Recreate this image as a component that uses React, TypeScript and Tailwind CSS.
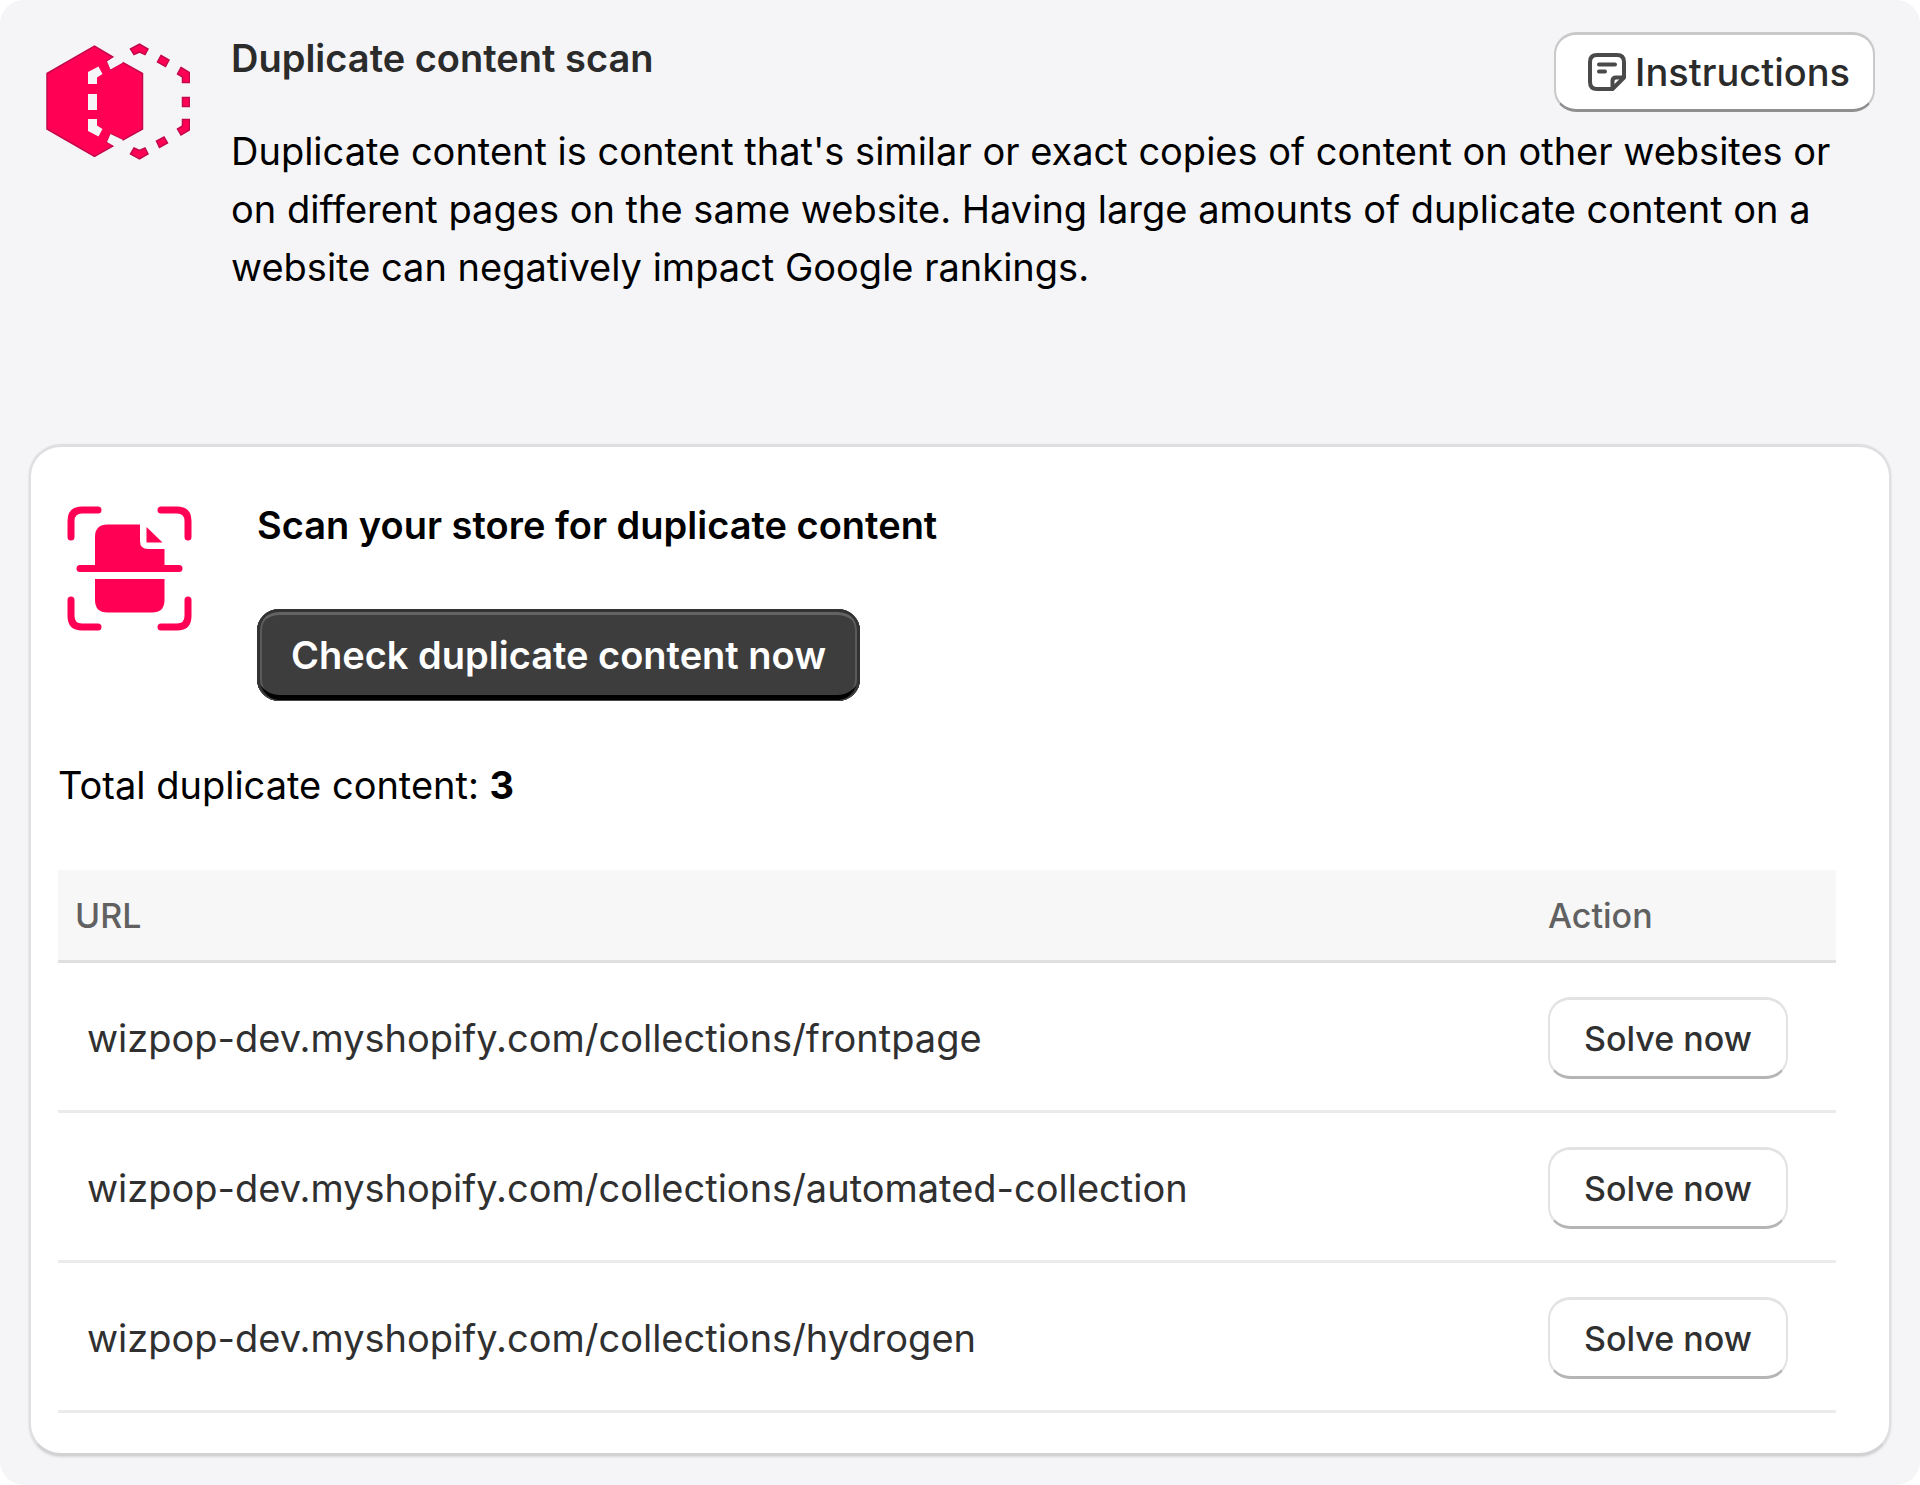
interface DuplicatePage {
  url: string;
}

const duplicatePages: DuplicatePage[] = [
  { url: 'wizpop-dev.myshopify.com/collections/frontpage' },
  { url: 'wizpop-dev.myshopify.com/collections/automated-collection' },
  { url: 'wizpop-dev.myshopify.com/collections/hydrogen' },
];

function DuplicateIcon() {
  return (
    <svg className="mt-[11px] h-[118px] w-36 shrink-0" viewBox="0 0 144 118" aria-hidden="true">
      <g fill="#ff0055" stroke="#c4074c" strokeWidth="1.5">
        <path d="M1 30.5 48.5 3 67 14 61 18 65 26 77 19.500 96.500 30.500V86L77 97 65 91 61 99 67 103 48.500 113.500 1 86Z" />
        <path d="M84.500 6 93.500 1 102 6 99 11.500 93.500 9 88 11.500Z" />
        <path d="M115 12.500 123 17 119.500 23.500 111.500 19Z" />
        <path d="M135 24.500 143.500 29.500V39.500H136.500V34L131.500 31Z" />
        <path d="M136.500 54.500h7v9h-7z" />
        <path d="M136.500 76.500h7v10.500l-8.500 5-3.500-6 5-3Z" />
        <path d="M118 94 121.500 100 113.500 104.500 110.500 98Z" />
        <path d="M88 105 93.500 107.500 99 105 102 111 93.500 116 84.500 111Z" />
      </g>
      <g fill="#f5f5f7">
        <path d="M52.500 23.500 56.500 31 51 34.500V41H42V29Z" />
        <path d="M42 51h9v16h-9z" />
        <path d="M42 76h9v6.500L56.500 86 52.500 93.500 42 88Z" />
        <path d="M61 18.500 68 14 77 19.500 64.500 26.500Z" />
        <path d="M61 99 64.500 91 77 97 68 103Z" />
      </g>
    </svg>
  );
}

function ScanIcon() {
  return (
    <svg className="mt-[7px] h-[126px] w-[126px] shrink-0" viewBox="0 0 126 126" aria-hidden="true">
      <g fill="none" stroke="#ff0055" strokeWidth="7" strokeLinecap="round">
        <path d="M4 31V15Q4 4 15 4H31" />
        <path d="M94 4h16Q121 4 121 15v16" />
        <path d="M4 94v16Q4 121 15 121H31" />
        <path d="M94 121h16Q121 121 121 110V94" />
        <path d="M13 62.500H112" />
      </g>
      <g fill="#ff0055">
        <path d="M28 62V31Q28 18.500 40.500 18.500H73V35Q73 43 81 43H97.500V62Z" />
        <path d="M79.500 21V36.500H95.500Z" />
        <path d="M28 73H97.500V94Q97.500 106.500 85 106.500H40.500Q28 106.500 28 94Z" />
      </g>
    </svg>
  );
}

function NoteIcon() {
  return (
    <svg className="h-[38px] w-[38px] shrink-0" viewBox="0 0 38 38" fill="none" stroke="#4a4a4a" strokeWidth="4" aria-hidden="true">
      <path d="M24.500 36H9Q2 36 2 29V9Q2 2 9 2H29Q36 2 36 9V24.500Z" strokeLinejoin="round" />
      <path d="M24.500 36V28Q24.500 24.500 28 24.500H36" />
      <path d="M11 11.500H27M11 18.500H17" strokeLinecap="round" />
    </svg>
  );
}

export default function App() {
  return (
    <div className="bg-white font-['Inter',sans-serif] text-[38px] text-black">
      <main className="rounded-3xl bg-[#f5f5f7] px-[29px] pt-8 pb-[29px]">
        <header className="flex gap-[41px] pr-4 pl-[17px]">
          <DuplicateIcon />
          <div className="flex-1">
            <div className="flex items-start justify-between">
              <h1 className="leading-[52px] font-semibold text-[#2b2b2b]">Duplicate content scan</h1>
              <button
                type="button"
                className="flex h-20 items-center gap-[9px] rounded-[22px] border-x-2 border-y-[3px] border-[#c9c9c9] border-b-[#8f8f8f] bg-white pr-[23px] pl-8 font-medium text-[#2b2b2b]"
              >
                <NoteIcon />
                Instructions
              </button>
            </div>
            <p className="mt-[10px] pr-4 leading-[58px]">
              Duplicate content is content that's similar or exact copies of content on other websites or on different
              pages on the same website. Having large amounts of duplicate content on a website can negatively impact
              Google rankings.
            </p>
          </div>
        </header>

        <section className="mt-[148px] rounded-[32px] border-x-2 border-y-[3px] border-[#dedfe1] border-b-[#d3d3d5] bg-white pt-[52px] pr-[53px] pb-10 pl-[27px] shadow-sm">
          <div className="flex gap-[64px] pl-[9px]">
            <ScanIcon />
            <div>
              <h2 className="leading-[52px] font-semibold">Scan your store for duplicate content</h2>
              <button
                type="button"
                className="mt-[58px] h-[92px] rounded-[22px] bg-[#3d3d3d] px-[34px] font-semibold text-white shadow-[inset_0_3px_0_#333,inset_0_-1px_0_#4a4a4a,inset_3px_0_0_#333,inset_-3px_0_0_#333,inset_0_-6px_0_#000,inset_0_6px_0_#636363,inset_5px_0_0_#5a5a5a,inset_-5px_0_0_#5a5a5a]"
              >
                Check duplicate content now
              </button>
            </div>
          </div>

          <p className="mt-[55px] leading-[58px]">
            Total duplicate content: <strong className="font-bold">{duplicatePages.length}</strong>
          </p>

          <table className="mt-14 w-full table-fixed border-separate border-spacing-0 text-left">
            <thead>
              <tr className="h-[93px] bg-[#f7f7f7] text-[34px] text-[#616161]">
                <th scope="col" className="border-b-[3px] border-[#e0e0e0] py-0 pl-[17px] font-medium">
                  URL
                </th>
                <th scope="col" className="w-[306px] border-b-[3px] border-[#e0e0e0] py-0 pl-[18px] font-medium">
                  Action
                </th>
              </tr>
            </thead>
            <tbody>
              {duplicatePages.map((page) => (
                <tr key={page.url} className="h-[150px] text-[#303030]">
                  <td className="border-b-[3px] border-[#ebebeb] pt-[3px] pb-0 pl-[29px]">{page.url}</td>
                  <td className="border-b-[3px] border-[#ebebeb] pt-[3px] pb-0 pl-[18px]">
                    <button
                      type="button"
                      className="block h-[82px] rounded-[22px] border-x-2 border-y-[3px] border-[#e3e3e3] border-b-[#b5b5b5] bg-white px-[34px] text-[34px] font-medium"
                    >
                      Solve now
                    </button>
                  </td>
                </tr>
              ))}
            </tbody>
          </table>
        </section>
      </main>
    </div>
  );
}
